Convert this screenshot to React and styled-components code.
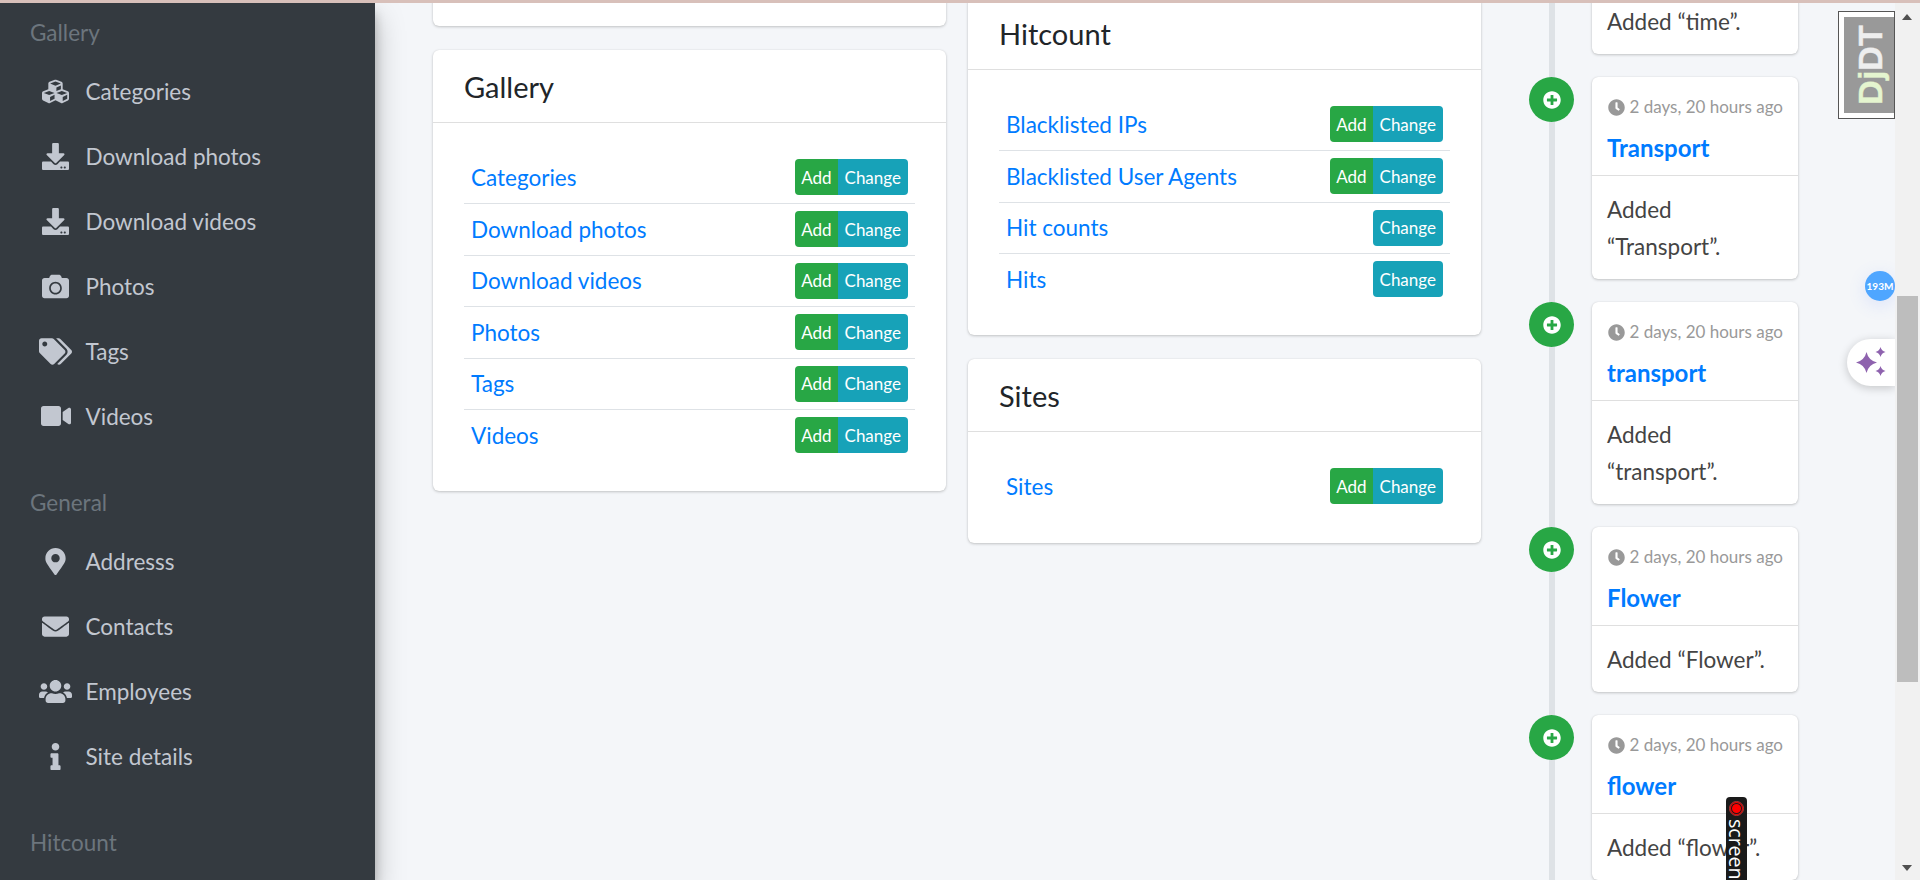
import React from 'react';
import styled, { createGlobalStyle } from 'styled-components';
import {
  FaCubes, FaDownload, FaCamera, FaTags, FaVideo, FaMapMarkerAlt,
  FaEnvelope, FaUsers, FaInfo, FaClock, FaPlusCircle,
} from 'react-icons/fa';

const FONT = '"Lato", "Noto Sans", "Liberation Sans", sans-serif';

const GlobalStyle = createGlobalStyle`
  html, body {
    margin: 0;
    padding: 0;
    height: 100%;
    overflow: hidden;
    background: #f4f6f9;
    font-family: ${FONT};
    font-size: 22.5px;
    color: #212529;
  }
  * { box-sizing: border-box; }
`;

const Page = styled.div`
  width: 1920px;
  height: 880px;
  overflow: hidden;
  position: relative;
  display: flex;
  flex-direction: column;
`;

const TopLine = styled.div`
  height: 3px;
  flex: none;
  background: #d8c0ba;
  position: relative;
  z-index: 5;
`;

const Body = styled.div`
  flex: 1;
  min-height: 0;
  display: flex;
`;

/* ---- sidebar ---- */
const Sidebar = styled.aside`
  width: 375px;
  flex: none;
  background: #343a40;
  box-shadow: 0 14px 28px rgba(0, 0, 0, 0.25), 0 10px 10px rgba(0, 0, 0, 0.22);
  position: relative;
  z-index: 2;
  overflow: hidden;
`;

const Nav = styled.nav`
  margin-top: -24.5px;
`;

const NavHeader = styled.div`
  padding: 39px 0 11px 30px;
  height: 80px;
  line-height: 30px;
  color: #6c757d;
`;

const NavItem = styled.a`
  height: 65px;
  display: flex;
  align-items: center;
  color: #c2c7d0;
`;

const NavIcon = styled.span`
  width: 85.5px;
  padding-left: 25.5px;
  flex: none;
  display: flex;
  justify-content: center;
  font-size: ${(p) => p.$size || 27}px;
  svg { display: block; }
`;

/* ---- content ---- */
const Content = styled.main`
  flex: 1;
  min-width: 0;
  display: flex;
  padding-left: 58px;
  align-items: flex-start;
`;

const Column = styled.div`
  width: 513px;
  flex: none;
  margin-right: 22px;
  margin-top: ${(p) => p.$shift}px;
  display: flex;
  flex-direction: column;
  gap: 24px;
`;

const Card = styled.section`
  background: #fff;
  border-radius: 6px;
  box-shadow: 0 0 1px rgba(0, 0, 0, 0.125), 0 1px 3px rgba(0, 0, 0, 0.2);
`;

const StubCard = styled(Card)`
  height: 60px;
`;

const CardHeader = styled.h3`
  margin: 0;
  height: 73px;
  padding: 0 31px;
  display: flex;
  align-items: center;
  font-size: 29px;
  font-weight: 400;
  border-bottom: 1px solid rgba(0, 0, 0, 0.125);
`;

const CardBody = styled.div`
  padding: 28.5px 31px 30.5px;
`;

const ModelRow = styled.div`
  height: 51.5px;
  padding: 0 7px;
  display: flex;
  align-items: center;
  justify-content: space-between;
  & + & { border-top: 1px solid #dee2e6; }
`;

const ModelLink = styled.a`
  color: #007bff;
`;

const Actions = styled.div`
  display: flex;
  border-radius: 4px;
  overflow: hidden;
`;

const Action = styled.span`
  height: 36px;
  padding: 0 ${(p) => (p.$kind === 'add' ? 6 : 7)}px;
  display: flex;
  align-items: center;
  color: #fff;
  font-size: 17px;
  background: ${(p) => (p.$kind === 'add' ? '#28a745' : '#17a2b8')};
`;

/* ---- timeline ---- */
const Timeline = styled.div`
  width: 269px;
  flex: none;
  margin: -114px 0 0 26px;
  position: relative;
  &::before {
    content: '';
    position: absolute;
    left: 20px;
    top: 0;
    bottom: 0;
    width: 6px;
    background: #dee2e6;
  }
`;

const Entry = styled.div`
  display: flex;
  gap: 18px;
  margin-bottom: 23px;
  position: relative;
`;

const Dot = styled.span`
  width: 45px;
  height: 45px;
  flex: none;
  border-radius: 50%;
  background: #28a745;
  display: flex;
  align-items: center;
  justify-content: center;
  font-size: 18px;
  color: #fff;
  svg { display: block; }
`;

const EntryCard = styled(Card)`
  width: 206px;
  flex: none;
`;

const EntryHead = styled.div`
  height: 99px;
  padding: 0 15px;
  border-bottom: 1px solid rgba(0, 0, 0, 0.125);
`;

const Time = styled.div`
  padding-top: 20px;
  display: flex;
  align-items: center;
  justify-content: flex-end;
  gap: 5px;
  font-size: 17px;
  line-height: 20px;
  color: #999;
  white-space: nowrap;
  svg { display: block; }
`;

const EntryTitle = styled.a`
  display: block;
  margin-top: 17px;
  color: #007bff;
  font-size: 24px;
  line-height: 28px;
  font-weight: 700;
`;

const EntryText = styled.div`
  padding: 15px 15px 14px;
  line-height: 37px;
  color: #444;
`;

/* ---- overlays ---- */
const ScrollTrack = styled.div`
  position: absolute;
  right: 0;
  top: 3px;
  bottom: 0;
  width: 25px;
  background: #f1f1f1;
  z-index: 4;
`;

const ScrollThumb = styled.div`
  position: absolute;
  left: 2px;
  right: 2px;
  top: 293px;
  height: 386px;
  background: #bdbdbd;
`;

const ScrollArrow = styled.span`
  position: absolute;
  left: 7px;
  width: 0;
  height: 0;
  border-left: 5.5px solid transparent;
  border-right: 5.5px solid transparent;
  ${(p) => (p.$down
    ? 'bottom: 9px; border-top: 6px solid #505050;'
    : 'top: 11px; border-bottom: 6px solid #505050;')}
`;

const DebugTab = styled.div`
  position: absolute;
  right: 25px;
  top: 11px;
  width: 57px;
  height: 108px;
  background: #999;
  border: 6px solid #fff;
  border-right: none;
  outline: 1px solid #555;
  outline-offset: -1px;
  z-index: 3;
  display: flex;
  align-items: center;
  justify-content: center;
`;

const DebugLabel = styled.span`
  display: block;
  transform: rotate(-90deg);
  font-family: "Liberation Sans", sans-serif;
  font-weight: 700;
  font-size: 34px;
  line-height: 1;
  color: #eee;
  white-space: nowrap;
  -webkit-text-stroke: 0.4px currentColor;
`;

const DebugDj = styled.span`
  color: #e5f5cf;
`;

const MemoryBubble = styled.div`
  position: absolute;
  right: 25px;
  top: 271px;
  width: 30px;
  height: 30px;
  border-radius: 50%;
  background: #4fa6ff;
  box-shadow: 0 4px 18px rgba(79, 120, 255, 0.15);
  color: #fff;
  font-size: 10px;
  font-weight: 700;
  display: flex;
  align-items: center;
  justify-content: center;
  z-index: 3;
`;

const SparkTab = styled.div`
  position: absolute;
  right: 25px;
  top: 339px;
  width: 48px;
  height: 47px;
  background: #fff;
  border-radius: 24px 0 0 24px;
  box-shadow: 0 2px 10px rgba(0, 0, 0, 0.2);
  display: flex;
  align-items: center;
  padding-left: 8px;
  z-index: 3;
`;

const RecordTab = styled.div`
  position: absolute;
  left: 1726px;
  top: 797px;
  width: 21px;
  height: 100px;
  background: #1a1a1a;
  border-radius: 4px;
  z-index: 3;
  display: flex;
  flex-direction: column;
  align-items: center;
  padding-top: 5px;
`;

const RecordDot = styled.span`
  width: 13px;
  height: 13px;
  flex: none;
  border-radius: 50%;
  background: #f00;
  box-shadow: inset 0 0 0 1px #f00, inset 0 0 0 2px #1a1a1a;
  outline: 1px solid #b33;
`;

const RecordText = styled.span`
  writing-mode: vertical-rl;
  margin-top: 4px;
  color: #fff;
  font-family: "Open Sans", sans-serif;
  font-size: 19.5px;
  line-height: 21px;
  white-space: nowrap;
`;

const gallery = [
  { label: 'Categories', icon: <FaCubes /> },
  { label: 'Download photos', icon: <FaDownload /> },
  { label: 'Download videos', icon: <FaDownload /> },
  { label: 'Photos', icon: <FaCamera /> },
  { label: 'Tags', icon: <FaTags />, size: 33 },
  { label: 'Videos', icon: <FaVideo />, size: 30 },
];

const general = [
  { label: 'Addresss', icon: <FaMapMarkerAlt /> },
  { label: 'Contacts', icon: <FaEnvelope /> },
  { label: 'Employees', icon: <FaUsers />, size: 33 },
  { label: 'Site details', icon: <FaInfo /> },
];

const hitcount = [
  { label: 'Blacklisted IPs', add: true },
  { label: 'Blacklisted User Agents', add: true },
  { label: 'Hit counts' },
  { label: 'Hits' },
];

const entries = [
  { title: 'time', text: 'Added “time”.' },
  { title: 'Transport', text: 'Added “Transport”.' },
  { title: 'transport', text: 'Added “transport”.' },
  { title: 'Flower', text: 'Added “Flower”.' },
  { title: 'flower', text: 'Added “flower”.' },
];

const NavLinks = ({ items }) => items.map((item) => (
  <NavItem key={item.label}>
    <NavIcon $size={item.size}>{item.icon}</NavIcon>
    {item.label}
  </NavItem>
));

const ModelCard = ({ title, rows }) => (
  <Card>
    <CardHeader>{title}</CardHeader>
    <CardBody>
      {rows.map((row) => (
        <ModelRow key={row.label}>
          <ModelLink>{row.label}</ModelLink>
          <Actions>
            {row.add && <Action $kind="add">Add</Action>}
            <Action $kind="change">Change</Action>
          </Actions>
        </ModelRow>
      ))}
    </CardBody>
  </Card>
);

const Sparkles = () => (
  <svg width="32" height="32" viewBox="0 0 32 32" fill="#8e62ae">
    <path d="M11.5 5 Q13.5 13.5 22 15.5 Q13.5 17.5 11.5 26 Q9.5 17.5 1 15.5 Q9.5 13.5 11.5 5Z" />
    <path d="M25.5 0 Q26.500 4 30.500 5 Q26.500 6 25.500 10 Q24.500 6 20.500 5 Q24.500 4 25.500 0Z" />
    <path d="M25.500 19 Q26.500 23 30.500 24 Q26.500 25 25.500 29 Q24.500 25 20.500 24 Q24.500 23 25.500 19Z" />
  </svg>
);

export default function App() {
  return (
    <Page>
      <GlobalStyle />
      <TopLine />
      <Body>
        <Sidebar>
          <Nav>
            <NavHeader>Gallery</NavHeader>
            <NavLinks items={gallery} />
            <NavHeader>General</NavHeader>
            <NavLinks items={general} />
            <NavHeader>Hitcount</NavHeader>
          </Nav>
        </Sidebar>
        <Content>
          <Column $shift={-37}>
            <StubCard />
            <ModelCard
              title="Gallery"
              rows={gallery.map((g) => ({ label: g.label, add: true }))}
            />
          </Column>
          <Column $shift={-6}>
            <ModelCard title="Hitcount" rows={hitcount} />
            <ModelCard title="Sites" rows={[{ label: 'Sites', add: true }]} />
          </Column>
          <Timeline>
            {entries.map((e) => (
              <Entry key={e.title}>
                <Dot><FaPlusCircle /></Dot>
                <EntryCard>
                  <EntryHead>
                    <Time><FaClock size={17} />2 days, 20 hours ago</Time>
                    <EntryTitle>{e.title}</EntryTitle>
                  </EntryHead>
                  <EntryText>{e.text}</EntryText>
                </EntryCard>
              </Entry>
            ))}
          </Timeline>
        </Content>
      </Body>
      <DebugTab>
        <DebugLabel><DebugDj>Dj</DebugDj>DT</DebugLabel>
      </DebugTab>
      <MemoryBubble>193M</MemoryBubble>
      <SparkTab><Sparkles /></SparkTab>
      <RecordTab>
        <RecordDot />
        <RecordText>screen r</RecordText>
      </RecordTab>
      <ScrollTrack>
        <ScrollArrow />
        <ScrollThumb />
        <ScrollArrow $down />
      </ScrollTrack>
    </Page>
  );
}
